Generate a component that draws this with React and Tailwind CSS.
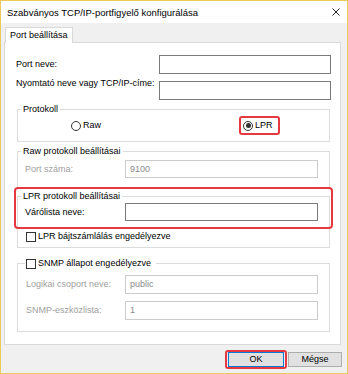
import React from "react";

const Radio = ({ checked }) => (
  <span className="w-[10px] h-[10px] rounded-full border border-[#333333] bg-white flex items-center justify-center shrink-0">
    {checked && <span className="w-[5px] h-[5px] rounded-full bg-[#333333]" />}
  </span>
);

const Checkbox = () => (
  <span className="w-[10px] h-[10px] border border-[#333333] bg-white shrink-0" />
);

const Field = ({ value, disabled, className = "" }) => (
  <div
    className={`flex items-center pl-[4px] bg-white border ${
      disabled ? "border-[#cccccc] text-[#8a8a8a]" : "border-[#7a7a7a]"
    } ${className}`}
  >
    {value}
  </div>
);

const App = () => {
  return (
    <div className="w-[348px] h-[374px] flex flex-col border border-[#ecc95a] bg-[#f0f0f0] font-['Liberation_Sans',Arial,sans-serif] text-[9px] leading-[11px] text-black">
      {/* Title bar */}
      <div className="h-[22px] bg-white flex items-center justify-between pl-[6px] pr-[7px] shrink-0">
        <span className="text-[9.5px]">Szabványos TCP/IP-portfigyelő konfigurálása</span>
        <svg width="8" height="8" viewBox="0 0 8 8">
          <path d="M0.5 0.5 L7.5 7.5 M7.5 0.5 L0.5 7.5" stroke="#222" strokeWidth="1" />
        </svg>
      </div>

      {/* Body */}
      <div className="flex-1 flex flex-col px-[3px] pt-[4px]">
        {/* Tab */}
        <div className="relative z-10 -mb-px ml-[1px] self-start h-[16px] border border-b-0 border-[#d9d9d9] bg-white flex items-center px-[4px] whitespace-nowrap">
          Port beállítása
        </div>

        {/* Panel */}
        <div className="w-[337px] h-[303px] border border-[#d9d9d9] bg-white flex flex-col">
          <div className="mt-[12px] flex items-center">
            <span className="w-[154px] pl-[11px]">Port neve:</span>
            <Field className="w-[172px] h-[19px]" />
          </div>
          <div className="mt-[7px] flex items-start">
            <span className="w-[154px] pl-[11px] -mt-[3px]">Nyomtató neve vagy TCP/IP-címe:</span>
            <Field className="w-[172px] h-[19px]" />
          </div>

          {/* Protokoll */}
          <fieldset className="mt-[3px] mx-[12px] w-[313px] border border-[#dcdcdc] pb-[9px]">
            <legend className="ml-[3px] px-[2px] leading-[13px]">Protokoll</legend>
            <div className="mt-[3px] h-[13px] flex items-center">
              <div className="ml-[53px] flex items-center gap-[2px]">
                <Radio />
                <span>Raw</span>
              </div>
              <div className="relative ml-[142px] flex items-center gap-[2px]">
                <Radio checked />
                <span>LPR</span>
                <span className="absolute -left-[4px] -top-[4px] w-[41px] h-[19px] border-2 border-[#e5393f] rounded-[3px]" />
              </div>
            </div>
          </fieldset>

          {/* Raw protokoll beállításai */}
          <fieldset className="mt-[3px] mx-[12px] w-[313px] border border-[#dcdcdc] pb-[9px]">
            <legend className="ml-[3px] px-[2px] leading-[13px]">Raw protokoll beállításai</legend>
            <div className="mt-[2px] flex items-center">
              <span className="w-[107px] pl-[7px] text-[#a0a0a0]">Port száma:</span>
              <Field disabled value="9100" className="w-[193px] h-[18px]" />
            </div>
          </fieldset>

          {/* LPR protokoll beállításai */}
          <div className="relative mt-[2px] mx-[12px] w-[313px]">
            <fieldset className="border border-[#dcdcdc] pb-[5px]">
              <legend className="ml-[3px] px-[2px] leading-[13px]">LPR protokoll beállításai</legend>
              <div className="flex items-center">
                <span className="w-[107px] pl-[7px]">Várólista neve:</span>
                <Field className="w-[193px] h-[18px]" />
              </div>
              <div className="mt-[10px] ml-[8px] h-[11px] flex items-center gap-[2px]">
                <Checkbox />
                <span>LPR bájtszámlálás engedélyezve</span>
              </div>
            </fieldset>
            <span className="absolute -left-[3px] -top-[3px] w-[319px] h-[42px] border-2 border-[#e5393f] rounded-[4px]" />
          </div>

          {/* SNMP */}
          <fieldset className="mt-[9px] mx-[12px] w-[313px] border border-[#dcdcdc] pb-[11px]">
            <legend className="ml-[7px] px-[1px] pr-[5px] h-[13px] flex items-center gap-[2px]">
              <Checkbox />
              <span>SNMP állapot engedélyezve</span>
            </legend>
            <div className="mt-[5px] flex items-center">
              <span className="w-[107px] pl-[8px] text-[#a0a0a0]">Logikai csoport neve:</span>
              <Field disabled value="public" className="w-[193px] h-[19px]" />
            </div>
            <div className="mt-[7px] flex items-center">
              <span className="w-[107px] pl-[8px] text-[#a0a0a0]">SNMP-eszközlista:</span>
              <Field disabled value="1" className="w-[193px] h-[19px]" />
            </div>
          </fieldset>
        </div>

        {/* Buttons */}
        <div className="mt-[7px] flex justify-end gap-[4px] pr-[2px]">
          <div className="relative">
            <button className="w-[56px] h-[15px] bg-[#e1e1e1] border border-[#0078d7] flex items-center justify-center">
              OK
            </button>
            <span className="absolute -left-[3px] -top-[2px] w-[62px] h-[19px] border-2 border-[#e5393f] rounded-[3px]" />
          </div>
          <button className="w-[54px] h-[15px] bg-[#e1e1e1] border border-[#adadad] flex items-center justify-center">
            Mégse
          </button>
        </div>
      </div>
    </div>
  );
};

export default App;
